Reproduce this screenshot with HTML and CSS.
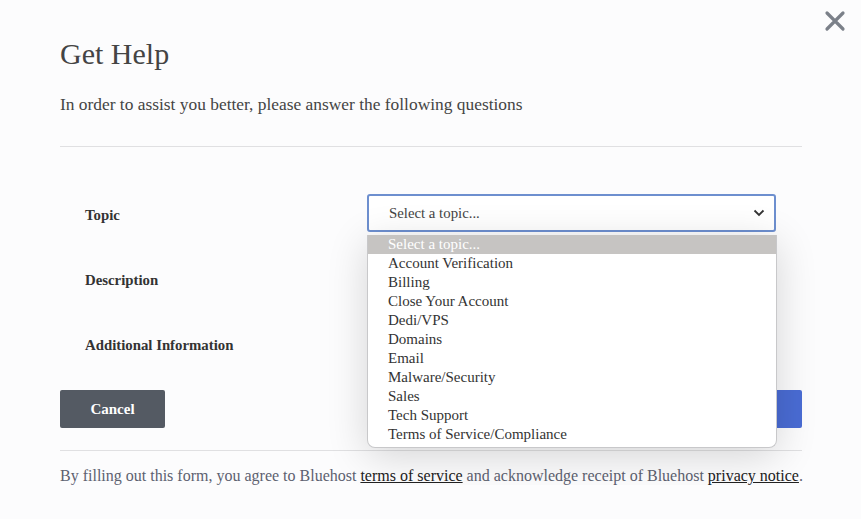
FILE: index.html
```html
<!DOCTYPE html>
<html lang="en">
<head>
    <meta charset="UTF-8">
    <title>Get Help</title>
    <link rel="stylesheet" href="styles.css">
</head>
<body>
    <div class="modal">
        <span class="close" aria-label="Close">
            <svg width="22" height="22" viewBox="0 0 22 22"><path d="M3 3 L19 19 M19 3 L3 19" stroke="#7b8089" stroke-width="3.2" stroke-linecap="round"/></svg>
        </span>

        <h1 class="title">Get Help</h1>
        <p class="lead">In order to assist you better, please answer the following questions</p>
        <hr class="rule">

        <form class="help-form">
            <div class="form-row">
                <label class="label">Topic</label>
                <div class="field select focused">
                    <span>Select a topic...</span>
                    <svg width="12" height="8" viewBox="0 0 12 8"><path d="M1.5 1.5 L6 6 L10.5 1.5" fill="none" stroke="#333" stroke-width="1.8"/></svg>
                </div>
            </div>
            <div class="form-row">
                <label class="label">Description</label>
                <div class="field"></div>
            </div>
            <div class="form-row">
                <label class="label">Additional Information</label>
                <div class="field"></div>
            </div>

            <div class="actions">
                <button type="button" class="btn btn-cancel">Cancel</button>
                <button type="button" class="btn btn-submit">Submit</button>
            </div>
        </form>

        <hr class="rule rule-bottom">
        <p class="terms">By filling out this form, you agree to Bluehost <a href="#">terms of service</a> and acknowledge receipt of Bluehost <a href="#">privacy notice</a>.</p>

        <!-- open topic list, drawn over the form -->
        <ul class="dropdown">
            <li class="active">Select a topic...</li>
            <li>Account Verification</li>
            <li>Billing</li>
            <li>Close Your Account</li>
            <li>Dedi/VPS</li>
            <li>Domains</li>
            <li>Email</li>
            <li>Malware/Security</li>
            <li>Sales</li>
            <li>Tech Support</li>
            <li>Terms of Service/Compliance</li>
        </ul>
    </div>
</body>
</html>
```

FILE: styles.css
```css
/* Basic page */
body {
    margin: 0;
    background-color: #fcfcfd;
    font-family: "Liberation Serif", "Times New Roman", serif;
    color: #444;
}

.modal {
    position: relative;
    padding: 37px 59px 0 60px;
}

.close {
    position: absolute;
    top: 10px;
    right: 15px;
}

.title {
    margin: 0;
    font-size: 30px;
    font-weight: normal;
    color: #444;
}

.lead {
    margin: 23px 0 0;
    font-size: 17.4px;
    line-height: 20px;
    color: #444;
}

.rule {
    margin: 32px 0 0;
    border: none;
    border-top: 1px solid #e0e0e2;
}

/* Form rows */
.help-form {
    display: flex;
    flex-direction: column;
    gap: 27px;
    margin-top: 47px;
}

.form-row {
    display: grid;
    grid-template-columns: 282px 409px;
    align-items: center;
    padding-left: 25px;
}

.label {
    padding-top: 5px;
    font-size: 14.8px;
    font-weight: bold;
    color: #333;
}

.field {
    height: 38px;
    box-sizing: border-box;
    border: 1px solid #c9c9cc;
    border-radius: 3px;
    background-color: #fff;
}

.select {
    display: flex;
    align-items: center;
    justify-content: space-between;
    padding: 0 9px 0 21px;
    font-size: 14.8px;
    color: #444;
}

.focused {
    border: 2px solid #6d8fcf;
    padding-left: 20px;
}

/* Buttons */
.actions {
    display: flex;
    justify-content: space-between;
    margin-top: 1px;
}

.btn {
    height: 38px;
    border: none;
    border-radius: 2px;
    font-family: inherit;
    font-size: 15px;
    font-weight: bold;
    color: #fff;
    cursor: pointer;
}

.btn-cancel {
    width: 105px;
    background-color: #545a63;
}

.btn-submit {
    width: 140px;
    background-color: #4a6cd4;
}

.rule-bottom {
    margin-top: 22px;
}

.terms {
    margin: 16px 0 0;
    font-size: 16px;
    white-space: nowrap;
    color: #5d6170;
}

.terms a {
    color: #222;
}

/* Open select list */
.dropdown {
    position: absolute;
    top: 235px;
    left: 367px;
    width: 408px;
    margin: 0;
    padding: 0 0 3px;
    list-style: none;
    background-color: #fff;
    border: 1px solid #c8c8ca;
    border-top: none;
    border-radius: 0 0 8px 8px;
    box-shadow: 0 8px 40px rgba(0, 0, 0, 0.16);
    overflow: hidden;
}

.dropdown li {
    height: 19px;
    line-height: 19px;
    padding-left: 20px;
    font-size: 15px;
    color: #333;
}

.dropdown li.active {
    background-color: #c6c4c2;
    color: #fff;
}
```
